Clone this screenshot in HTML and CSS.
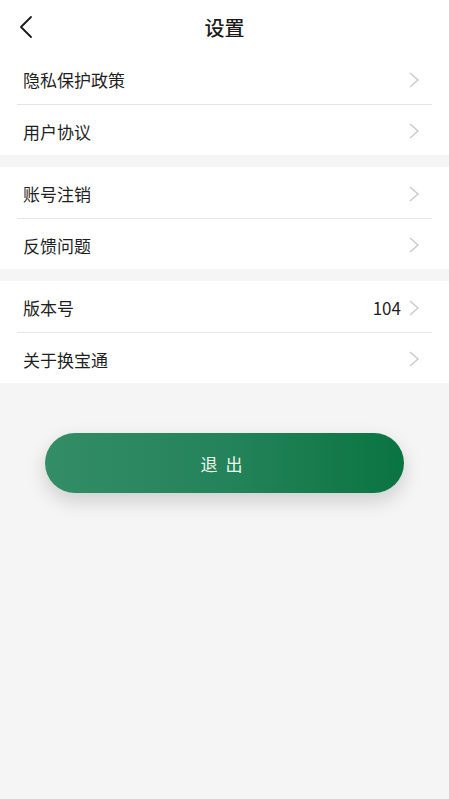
FILE: index.html
```html
<!DOCTYPE html>
<html lang="zh">
<head>
<meta charset="utf-8">
<title>设置</title>
<link rel="stylesheet" href="styles.css">
</head>
<body>
<div class="page">
  <header class="topbar">
    <span class="back">
      <svg width="14" height="24" viewBox="0 0 14 24"><path d="M12 2 L2 12 L12 22" fill="none" stroke="#1a1a1a" stroke-width="1.8" stroke-linecap="round" stroke-linejoin="round"/></svg>
    </span>
    <h1 class="title">设置</h1>
  </header>

  <section class="group">
    <div class="row"><span class="label">隐私保护政策</span><span class="right"><svg class="chev" width="12" height="16" viewBox="0 0 12 16"><path d="M2 1 L10 8 L2 15" fill="none" stroke="#c9c9c9" stroke-width="1.4"/></svg></span></div>
    <div class="row"><span class="label">用户协议</span><span class="right"><svg class="chev" width="12" height="16" viewBox="0 0 12 16"><path d="M2 1 L10 8 L2 15" fill="none" stroke="#c9c9c9" stroke-width="1.4"/></svg></span></div>
  </section>

  <section class="group">
    <div class="row"><span class="label">账号注销</span><span class="right"><svg class="chev" width="12" height="16" viewBox="0 0 12 16"><path d="M2 1 L10 8 L2 15" fill="none" stroke="#c9c9c9" stroke-width="1.4"/></svg></span></div>
    <div class="row"><span class="label">反馈问题</span><span class="right"><svg class="chev" width="12" height="16" viewBox="0 0 12 16"><path d="M2 1 L10 8 L2 15" fill="none" stroke="#c9c9c9" stroke-width="1.4"/></svg></span></div>
  </section>

  <section class="group">
    <div class="row"><span class="label">版本号</span><span class="right"><span class="value">104</span><svg class="chev" width="12" height="16" viewBox="0 0 12 16"><path d="M2 1 L10 8 L2 15" fill="none" stroke="#c9c9c9" stroke-width="1.4"/></svg></span></div>
    <div class="row"><span class="label">关于换宝通</span><span class="right"><svg class="chev" width="12" height="16" viewBox="0 0 12 16"><path d="M2 1 L10 8 L2 15" fill="none" stroke="#c9c9c9" stroke-width="1.4"/></svg></span></div>
  </section>

  <div class="actions">
    <button class="logout">退出</button>
  </div>
</div>
</body>
</html>
```

FILE: styles.css
```css
* { box-sizing: border-box; }
html, body {
  margin: 0;
  padding: 0;
  background: #f5f5f5;
  font-family: "Noto Sans CJK SC", "Noto Sans", sans-serif;
  color: #1f1f1f;
}
.page {
  width: 449px;
  min-height: 799px;
  background: #f5f5f5;
}
.topbar {
  height: 53px;
  background: #fff;
  display: flex;
  align-items: center;
  justify-content: center;
  position: relative;
}
.back {
  position: absolute;
  left: 19px;
  top: 15px;
  display: flex;
}
.title {
  margin: 0;
  font-size: 20px;
  font-weight: 500;
  color: #1a1a1a;
  line-height: 1;
  margin-top: 2px;
}
.group {
  background: #fff;
  padding: 0 17px;
  margin-bottom: 12px;
}
.row {
  height: 51px;
  display: flex;
  align-items: center;
  justify-content: space-between;
  padding-left: 6px;
  padding-right: 12px;
  padding-top: 2px;
}
.row + .row {
  border-top: 1px solid #e6e6e6;
}
.label {
  font-size: 17px;
  color: #1f1f1f;
}
.right {
  display: flex;
  align-items: center;
  gap: 7px;
}
.value {
  font-size: 17px;
  color: #1f1f1f;
}
.chev { display: block; }
.actions {
  padding: 38px 45px 0;
}
.logout {
  display: block;
  width: 359px;
  height: 60px;
  border: none;
  border-radius: 30px;
  background: linear-gradient(90deg, #338d66 0%, #24835a 50%, #0a7441 100%);
  box-shadow: 0 8px 20px rgba(0, 0, 0, 0.16);
  color: #eef6f1;
  font-family: "Noto Sans CJK SC", "Noto Sans", sans-serif;
  font-size: 17px;
  letter-spacing: 8px;
  padding-left: 8px;
}
```
